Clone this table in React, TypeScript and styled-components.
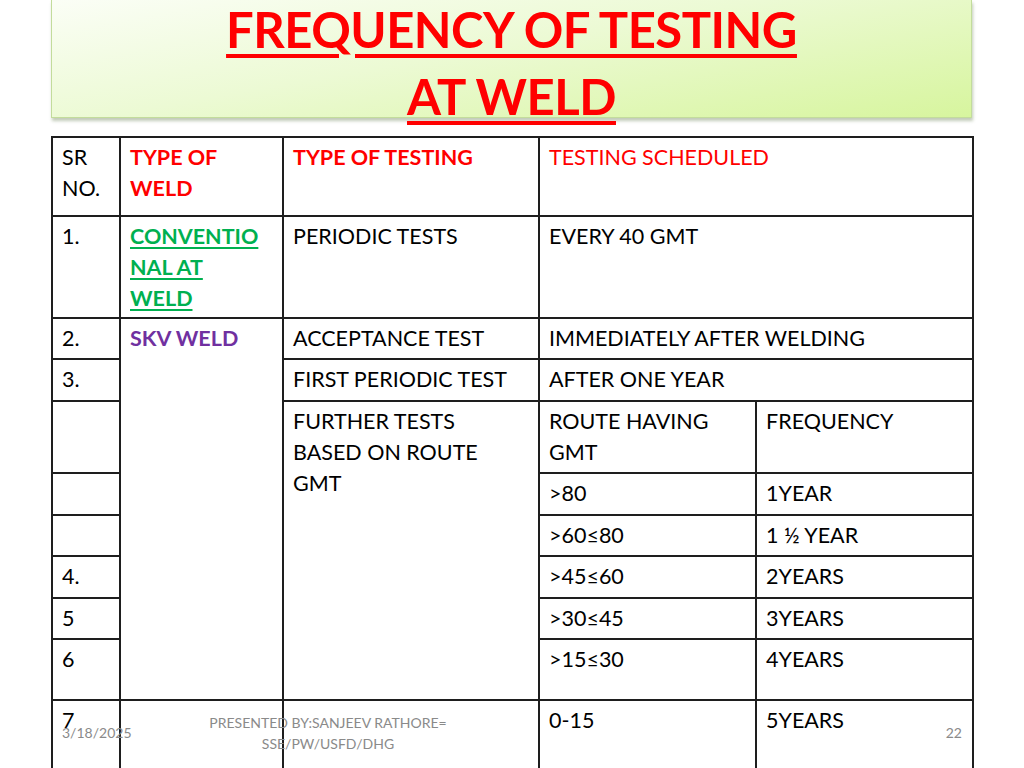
import React from 'react';
import styled, { createGlobalStyle } from 'styled-components';

const GlobalStyle = createGlobalStyle`
    html, body {
        margin: 0;
        padding: 0;
        background: #ffffff;
        overflow: hidden;
    }
    body {
        font-family: Lato, "Open Sans", sans-serif;
    }
`;

const Slide = styled.div`
    position: relative;
    width: 1024px;
    height: 768px;
    overflow: hidden;
    background: #ffffff;
`;

const TitleBox = styled.div`
    margin: 0 52px 0 51px;
    height: 118px;
    box-sizing: border-box;
    border: 1px solid #c3dc9c;
    border-top: none;
    background: linear-gradient(170deg, #fbfef6 0%, #ecfad4 45%, #d7f59e 100%);
    box-shadow: 1px 3px 3px rgba(120, 140, 100, 0.45);
    display: flex;
    flex-direction: column;
    align-items: center;
`;

const TitleLine = styled.div<{ $first?: boolean }>`
    font-family: Lato, "Open Sans", sans-serif;
    font-weight: 700;
    font-size: 49px;
    line-height: 67px;
    color: #ff0000;
    text-decoration: underline;
    text-decoration-thickness: 4px;
    text-underline-offset: 6px;
    letter-spacing: -0.5px;
    margin-top: ${p => (p.$first ? '-4px' : '0')};
`;

const Table = styled.table`
    margin: 18px 0 0 51px;
    width: 921px;
    table-layout: fixed;
    border-collapse: collapse;
`;

const Cell = styled.td<{ $tone?: 'red' | 'redBold' | 'green' | 'purple' }>`
    border: 2px solid #1e1e1e;
    padding: 4px 8px 0 9px;
    vertical-align: top;
    font-family: Lato, "Open Sans", sans-serif;
    font-size: 21.5px;
    line-height: 31px;
    color: ${p =>
        p.$tone === 'red' || p.$tone === 'redBold'
            ? '#ff0000'
            : p.$tone === 'green'
              ? '#00b050'
              : p.$tone === 'purple'
                ? '#7030a0'
                : '#000000'};
    font-weight: ${p => (p.$tone && p.$tone !== 'red' ? 700 : 400)};
    text-decoration: ${p => (p.$tone === 'green' ? 'underline' : 'none')};
    text-underline-offset: 3px;
`;

const Footer = styled.div`
    position: absolute;
    left: 0;
    right: 0;
    top: 711px;
    font-family: Lato, "Open Sans", sans-serif;
    font-size: 14px;
    color: #8a8a8a;
`;

const FooterDate = styled.span`
    position: absolute;
    left: 62px;
    top: 13px;
`;

const FooterCenter = styled.span`
    position: absolute;
    left: 178px;
    width: 300px;
    top: 1px;
    text-align: center;
    line-height: 21px;
`;

const FooterPage = styled.span`
    position: absolute;
    right: 62px;
    top: 13px;
`;

const rateRows = [
    { sr: '', route: '>80', freq: '1YEAR', h: 42 },
    { sr: '', route: '>60≤80', freq: '1 ½ YEAR', h: 41 },
    { sr: '4.', route: '>45≤60', freq: '2YEARS', h: 42 },
    { sr: '5', route: '>30≤45', freq: '3YEARS', h: 41 },
];

const App: React.FunctionComponent = () => {
    return (
        <Slide>
            <GlobalStyle />
            <TitleBox>
                <TitleLine $first>FREQUENCY OF TESTING</TitleLine>
                <TitleLine>AT WELD</TitleLine>
            </TitleBox>
            <Table>
                <colgroup>
                    <col style={{ width: 68 }} />
                    <col style={{ width: 163 }} />
                    <col style={{ width: 256 }} />
                    <col style={{ width: 217 }} />
                    <col style={{ width: 217 }} />
                </colgroup>
                <tbody>
                    <tr style={{ height: 79 }}>
                        <Cell>
                            SR
                            <br />
                            NO.
                        </Cell>
                        <Cell $tone="redBold">
                            TYPE OF
                            <br />
                            WELD
                        </Cell>
                        <Cell $tone="redBold">TYPE OF TESTING</Cell>
                        <Cell $tone="red" colSpan={2}>
                            TESTING SCHEDULED
                        </Cell>
                    </tr>
                    <tr style={{ height: 102 }}>
                        <Cell>1.</Cell>
                        <Cell $tone="green">
                            CONVENTIO
                            <br />
                            NAL AT
                            <br />
                            WELD
                        </Cell>
                        <Cell>PERIODIC TESTS</Cell>
                        <Cell colSpan={2}>EVERY 40 GMT</Cell>
                    </tr>
                    <tr style={{ height: 41 }}>
                        <Cell>2.</Cell>
                        <Cell $tone="purple" rowSpan={8}>
                            SKV WELD
                        </Cell>
                        <Cell>ACCEPTANCE TEST</Cell>
                        <Cell colSpan={2}>IMMEDIATELY AFTER WELDING</Cell>
                    </tr>
                    <tr style={{ height: 42 }}>
                        <Cell>3.</Cell>
                        <Cell>FIRST PERIODIC TEST</Cell>
                        <Cell colSpan={2}>AFTER ONE YEAR</Cell>
                    </tr>
                    <tr style={{ height: 72 }}>
                        <Cell />
                        <Cell rowSpan={6}>
                            FURTHER TESTS
                            <br />
                            BASED ON ROUTE
                            <br />
                            GMT
                        </Cell>
                        <Cell>
                            ROUTE HAVING
                            <br />
                            GMT
                        </Cell>
                        <Cell>FREQUENCY</Cell>
                    </tr>
                    {rateRows.map(r => (
                        <tr key={r.route} style={{ height: r.h }}>
                            <Cell>{r.sr}</Cell>
                            <Cell>{r.route}</Cell>
                            <Cell>{r.freq}</Cell>
                        </tr>
                    ))}
                    <tr style={{ height: 61 }}>
                        <Cell>6</Cell>
                        <Cell>{'>15≤30'}</Cell>
                        <Cell>4YEARS</Cell>
                    </tr>
                    <tr style={{ height: 90 }}>
                        <Cell>7</Cell>
                        <Cell />
                        <Cell />
                        <Cell>0-15</Cell>
                        <Cell>5YEARS</Cell>
                    </tr>
                </tbody>
            </Table>
            <Footer>
                <FooterDate>3/18/2025</FooterDate>
                <FooterCenter>
                    PRESENTED BY:SANJEEV RATHORE=
                    <br />
                    SSE/PW/USFD/DHG
                </FooterCenter>
                <FooterPage>22</FooterPage>
            </Footer>
        </Slide>
    );
};

export default App;
